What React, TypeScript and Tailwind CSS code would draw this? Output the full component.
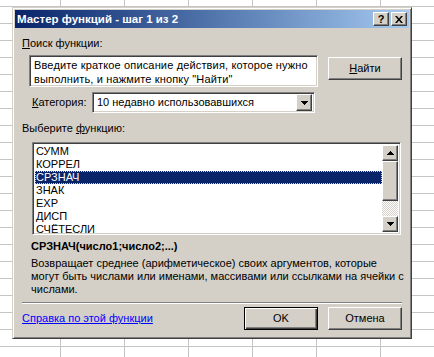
import type { ReactNode } from 'react';

const raised =
  'border border-t-white border-l-white border-r-[#404040] border-b-[#404040] shadow-[inset_-1px_-1px_#808080,inset_1px_1px_#d4d0c8] bg-[#d4d0c8]';
const sunken =
  'border border-t-[#808080] border-l-[#808080] border-r-white border-b-white shadow-[inset_1px_1px_#404040,inset_-1px_-1px_#d4d0c8]';

function Button({ children, isDefault = false }: { children: ReactNode; isDefault?: boolean }) {
  const frame = isDefault
    ? 'border border-black shadow-[inset_1px_1px_#fff,inset_-1px_-1px_#404040,inset_-2px_-2px_#808080] bg-[#d4d0c8]'
    : raised;
  return (
    <div className={`w-[74px] h-[23px] flex items-center justify-center text-black ${frame}`}>
      {children}
    </div>
  );
}

function Arrow({ up }: { up?: boolean }) {
  return (
    <svg width="7" height="4" viewBox="0 0 7 4" className={up ? '' : 'rotate-180'}>
      <path d="M3 0h1v1h1v1h1v1h1v1H0V3h1V2h1V1h1z" fill="#000" />
    </svg>
  );
}

const functions = ['СУММ', 'КОРРЕЛ', 'СРЗНАЧ', 'ЗНАК', 'EXP', 'ДИСП', 'СЧЁТЕСЛИ'];

export default function App() {
  return (
    <div className="relative w-[434px] h-[357px] overflow-hidden bg-white bg-[linear-gradient(to_right,#c4c4c4_1px,transparent_1px),linear-gradient(to_bottom,#c4c4c4_1px,transparent_1px)] bg-[size:64px_17px] bg-[position:60px_6px] font-['Liberation_Sans',sans-serif] text-[11px] leading-[13px] text-black">
      {/* dialog window */}
      <div className="absolute left-[12px] top-[7px] w-[400px] h-[332px] p-[2px] bg-[#d4d0c8] border border-t-[#d4d0c8] border-l-[#d4d0c8] border-r-[#404040] border-b-[#404040] shadow-[inset_1px_1px_#fff,inset_-1px_-1px_#808080]">
        <div className="h-[18px] flex items-center justify-between pl-[2px] pr-[2px] bg-linear-to-r from-[#0a246a] to-[#a6caf0]">
          <span className="text-white font-bold text-[11.5px]">Мастер функций - шаг 1 из 2</span>
          <div className="flex gap-[2px]">
            <div className={`w-[16px] h-[14px] flex items-center justify-center font-bold text-[11px] leading-none ${raised}`}>
              ?
            </div>
            <div className={`w-[16px] h-[14px] flex items-center justify-center ${raised}`}>
              <svg width="8" height="7" viewBox="0 0 8 7">
                <path d="M0 0h2l2 2.5L6 0h2L5 3.5 8 7H6L4 4.5 2 7H0l3-3.5z" fill="#000" />
              </svg>
            </div>
          </div>
        </div>

        <div className="pl-[7px] pt-[9px]">
          <span className="underline">П</span>оиск функции:
        </div>

        <div className="flex mt-[5px] pl-[14px] gap-[10px]">
          <div className={`w-[289px] h-[32px] bg-white px-[4px] pt-[2px] leading-[14px] tracking-[0.15px] ${sunken}`}>
            Введите краткое описание действия, которое нужно
            <br />
            выполнить, и нажмите кнопку "Найти"
          </div>
          <div className="mt-[2px]">
            <Button>
              <span className="underline">Н</span>айти
            </Button>
          </div>
        </div>

        <div className="flex items-center mt-[5px] pl-[17px]">
          <div className="w-[60px]">
            <span className="underline">К</span>атегория:
          </div>
          <div className={`w-[223px] h-[21px] bg-white flex items-center p-[2px] ${sunken}`}>
            <span className="flex-1 pl-[2px]">10 недавно использовавшихся</span>
            <div className={`w-[16px] h-[17px] flex items-center justify-center ${raised}`}>
              <Arrow />
            </div>
          </div>
        </div>

        <div className="pl-[7px] mt-[9px]">
          Выберите <span className="underline">ф</span>ункцию:
        </div>

        <div className={`ml-[17px] mt-[7px] w-[369px] h-[93px] bg-white flex p-[2px] ${sunken}`}>
          <div className="flex-1">
            {functions.map((name) => (
              <div
                key={name}
                className={
                  name === 'СРЗНАЧ'
                    ? 'h-[13px] pl-[1px] bg-[#0a246a] text-white outline-1 outline-dotted outline-[#d4d0c8] -outline-offset-1'
                    : 'h-[13px] pl-[1px]'
                }
              >
                {name}
              </div>
            ))}
          </div>
          <div className="w-[16px] flex flex-col">
            <div className={`h-[16px] flex items-center justify-center ${raised}`}>
              <Arrow up />
            </div>
            <div className={`h-[40px] ${raised}`} />
            <div className="flex-1 bg-[repeating-conic-gradient(#d4d0c8_0_25%,#ffffff_0_50%)] bg-[size:2px_2px]" />
            <div className={`h-[16px] flex items-center justify-center ${raised}`}>
              <Arrow />
            </div>
          </div>
        </div>

        <div className="pl-[16px] mt-[5px] font-bold">СРЗНАЧ(число1;число2;...)</div>
        <div className="pl-[16px] mt-[4px] whitespace-nowrap">
          Возвращает среднее (арифметическое) своих аргументов, которые
          <br />
          могут быть числами или именами, массивами или ссылками на ячейки с
          <br />
          числами.
        </div>

        <div className="ml-[7px] mt-[6px] w-[380px] h-[2px] border-t border-t-[#808080] border-b border-b-white" />

        <div className="flex items-center mt-[3px] pl-[7px] pr-[7px] gap-[10px]">
          <span className="flex-1 text-[#0000ff] underline">Справка по этой функции</span>
          <Button isDefault>OK</Button>
          <Button>Отмена</Button>
        </div>
      </div>
    </div>
  );
}
